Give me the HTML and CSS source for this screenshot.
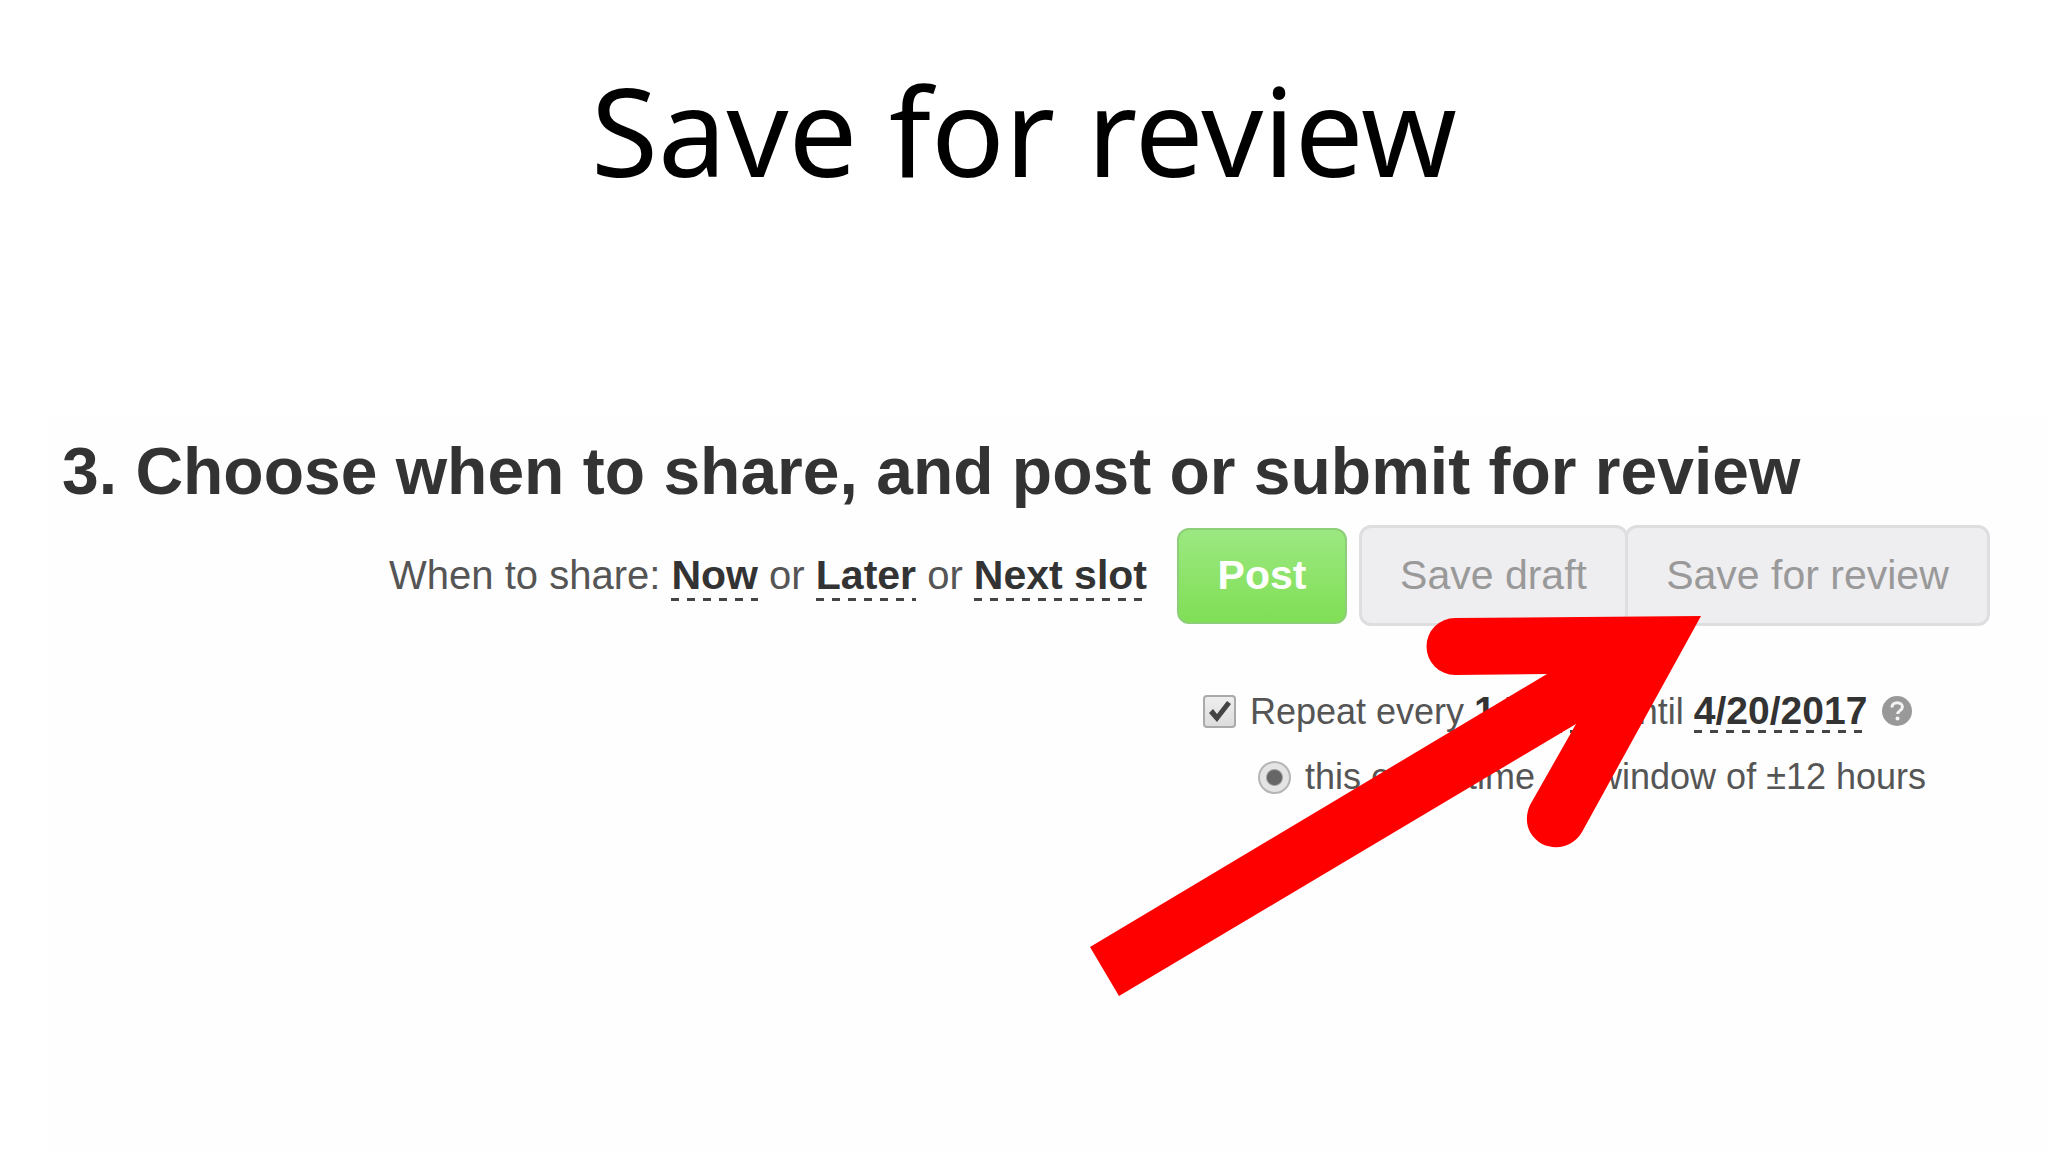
FILE: index.html
```html
<!DOCTYPE html>
<html lang="en">
<head>
  <meta charset="utf-8">
  <meta name="viewport" content="width=device-width, initial-scale=1">
  <title>Save for review</title>
  <link rel="stylesheet" href="styles.css">
</head>
<body>
  <main class="slide">
    <h1 class="slide-title">Save for review</h1>

    <form class="panel">
      <h2 class="step-title">3. Choose when to share, and post or submit for review</h2>

      <div class="share-row">
        <p class="when">When to share: <a class="pick" href="#now">Now</a> or <a class="pick" href="#later">Later</a> or <a class="pick" href="#next">Next slot</a></p>
        <button class="btn btn-post" type="button">Post</button>
        <div class="btn-group">
          <button class="btn btn-plain btn-draft" type="button">Save draft</button>
          <button class="btn btn-plain btn-review" type="button">Save for review</button>
        </div>
      </div>

      <div class="options">
        <div class="option">
          <input class="check" type="checkbox" id="repeat" checked>
          <p class="option-text"><label for="repeat">Repeat every</label> <a class="pick" href="#interval">1 Week</a> until <a class="pick" href="#until">4/20/2017</a></p>
          <a class="help" href="#help" aria-label="Help">
            <svg viewBox="0 0 32 32" width="32" height="32" aria-hidden="true">
              <circle cx="16" cy="16" r="15" fill="#999"/>
              <path d="M11 12.500c0-3 2.200-4.800 5.200-4.800s5.200 1.700 5.200 4.300c0 3.600-4.700 3.700-4.700 7" fill="none" stroke="#f4f4f4" stroke-width="3"/>
              <circle cx="16.500" cy="23.500" r="2" fill="#f4f4f4"/>
            </svg>
          </a>
        </div>
        <div class="option option-sub">
          <input class="radio" type="radio" name="timing" id="exact" checked>
          <label for="exact">this exact time</label>
          <input class="radio" type="radio" name="timing" id="window">
          <label for="window">window of ±12 hours</label>
        </div>
      </div>

      <svg class="arrow" viewBox="0 0 613 382" width="613" height="382" aria-hidden="true">
        <path d="M611 0 492 216C484 230 467 235 452 228 438 220 433 205 440 189L486 108 29 380 0 331 457 58 365 59A28 28 0 0 1 365 2Z" fill="#f00"/>
      </svg>
    </form>
  </main>
</body>
</html>
```
FILE: styles.css
```css
* {
  box-sizing: border-box;
}

body {
  margin: 0;
  background: #fff;
  color: #555;
  font-family: "Liberation Sans", Arial, sans-serif;
}

h1,
h2,
p {
  margin: 0;
}

.slide {
  display: flex;
  flex-direction: column;
  min-height: 100vh;
  padding-top: 50px;
}

.slide-title {
  color: #000;
  font-family: "Noto Sans", "Open Sans", sans-serif;
  font-size: 122px;
  font-weight: 400;
  line-height: 160px;
  text-align: center;
}

.panel {
  position: relative;
  flex: 1;
  display: flex;
  flex-direction: column;
  margin: 208px 0 0 48px;
  padding: 13px 58px 40px 14px;
  background: #fefefe;
}

.step-title {
  color: #333;
  font-size: 66px;
  line-height: 80px;
}

.share-row {
  display: flex;
  justify-content: flex-end;
  align-items: center;
  margin-top: 14px;
}

.when {
  margin-right: 30px;
  font-size: 40px;
}

.pick {
  padding-bottom: 3px;
  background: repeating-linear-gradient(90deg, #444 0 8px, transparent 8px 16px) left bottom / 100% 3px no-repeat;
  color: #333;
  font-weight: 700;
  text-decoration: none;
}

.when .pick {
  font-size: 41px;
}

.btn {
  padding: 0;
  font-family: inherit;
  font-size: 41px;
  border-radius: 12px;
}

.btn-post {
  width: 170px;
  height: 96px;
  margin-right: 12px;
  border: 2px solid #8ccf78;
  background: linear-gradient(#9be881, #80df55);
  color: #fff;
  font-weight: 700;
}

.btn-group {
  display: flex;
}

.btn-plain {
  height: 101px;
  border: 3px solid #dedde0;
  background: #eeedf0;
  color: #999;
}

.btn-draft {
  width: 269px;
}

.btn-review {
  width: 365px;
  margin-left: -3px;
}

.options {
  align-self: flex-end;
  margin: 52px 64px 0 0;
  font-size: 36px;
}

.option {
  display: flex;
  align-items: center;
  height: 66px;
}

.option .pick {
  padding-bottom: 1px;
  font-size: 39px;
}

.option-sub {
  padding-left: 55px;
}

.check,
.radio {
  appearance: none;
  flex: none;
  width: 33px;
  height: 33px;
  margin: 0 14px 0 0;
}

.check {
  border: 2px solid #aaa;
  border-radius: 4px;
  background: linear-gradient(#eee, #ddd);
}

.check:checked {
  background:
    url("data:image/svg+xml,%3Csvg xmlns='http://www.w3.org/2000/svg' viewBox='0 0 29 29'%3E%3Cpath d='M4 16l4-4 4 5L22 4l4 3L12 25z' fill='%23444'/%3E%3C/svg%3E") center / 100% no-repeat,
    linear-gradient(#eee, #ddd);
}

.radio {
  border: 2px solid #b5b5b5;
  border-radius: 50%;
  background: #e8e8e8;
}

.radio:checked {
  background: radial-gradient(circle, #666 0 7px, #e4e4e4 9px);
}

.option-sub label + .radio {
  margin-left: 14px;
}

.help {
  display: flex;
  margin-left: 14px;
}

.arrow {
  position: absolute;
  top: 198px;
  right: 345px;
  pointer-events: none;
}
```
